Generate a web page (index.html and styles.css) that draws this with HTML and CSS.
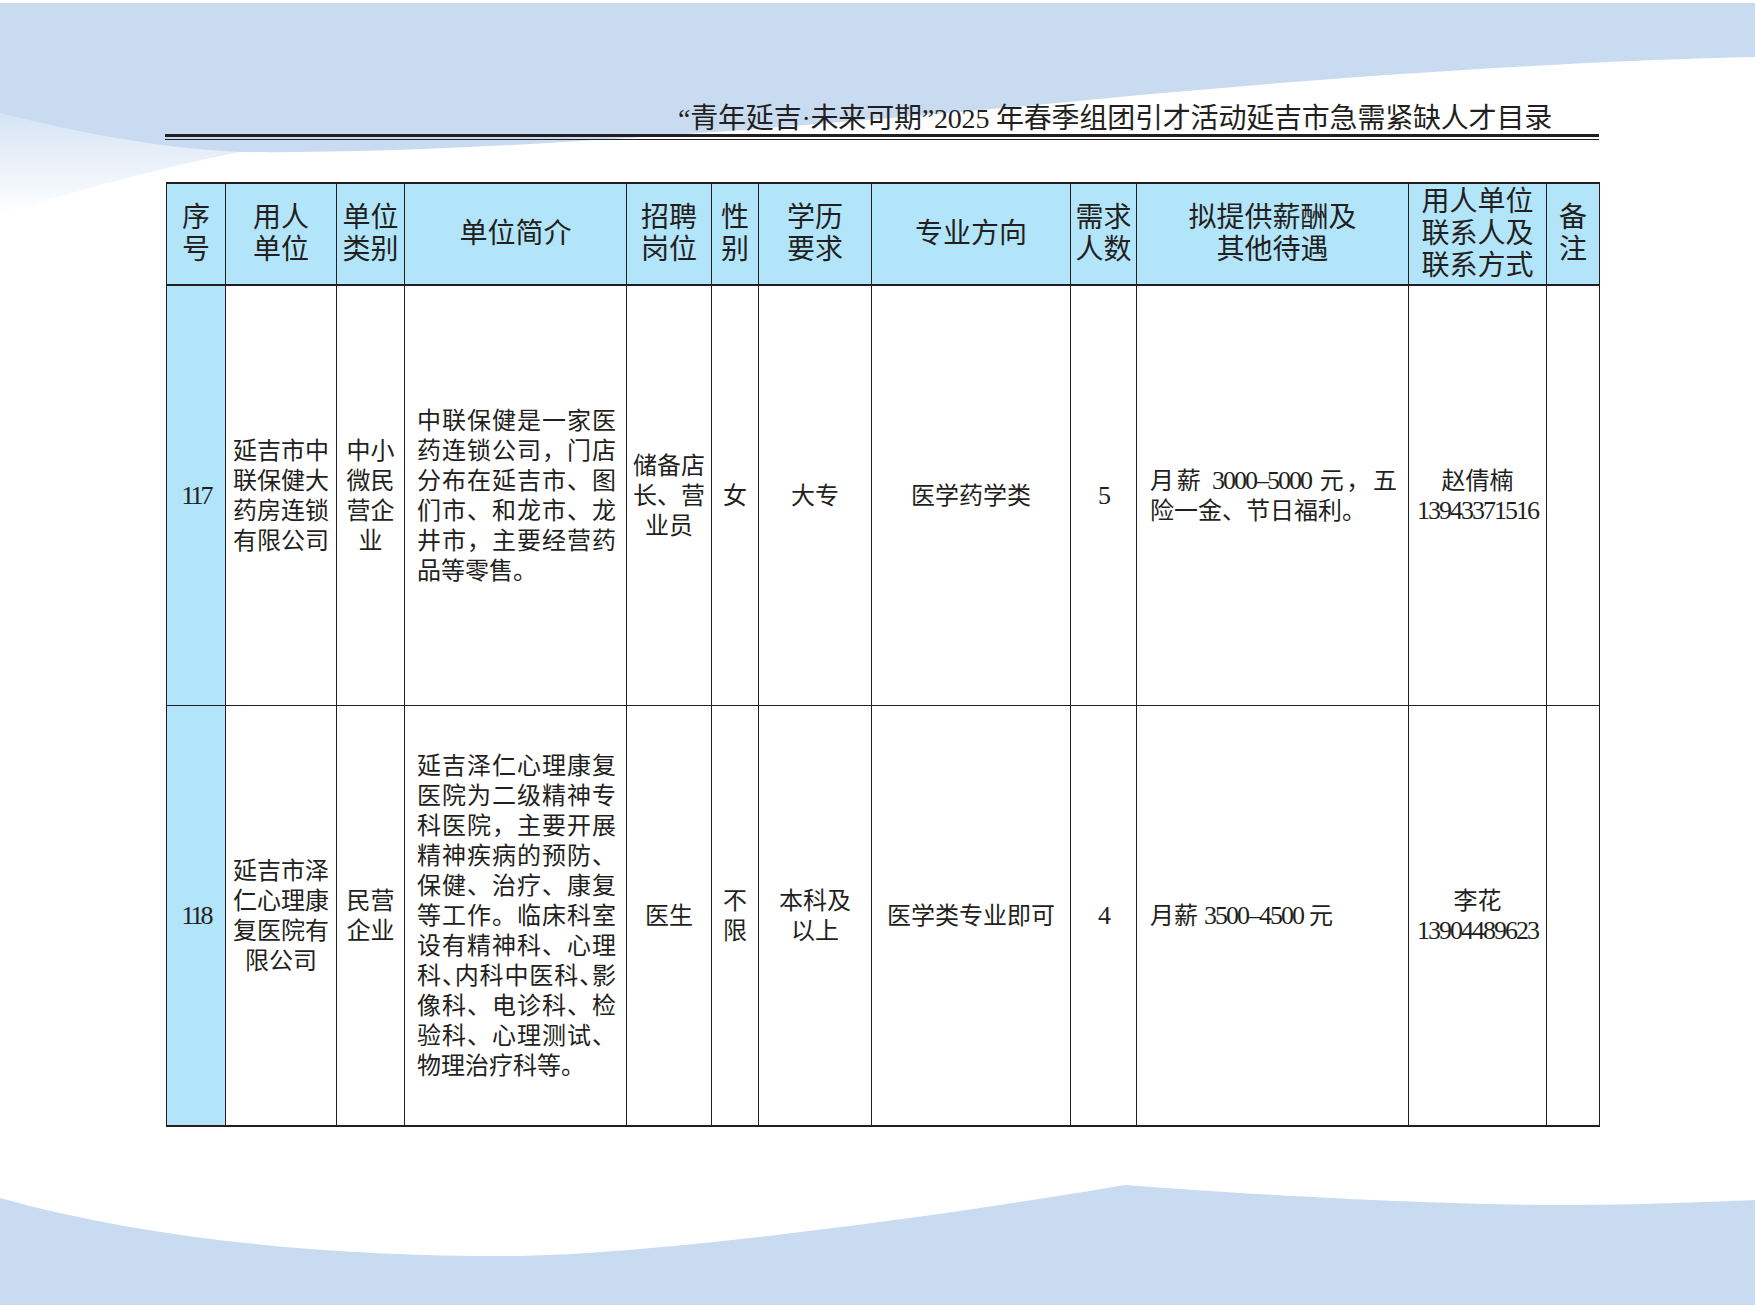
FILE: index.html
```html
<!DOCTYPE html>
<html lang="zh-CN">
<head>
<meta charset="utf-8">
<title>延吉市急需紧缺人才目录</title>
<link rel="stylesheet" href="styles.css">
</head>
<body>
<svg class="bg" viewBox="0 0 1755 1307" width="1755" height="1307" aria-hidden="true">
  <defs>
    <linearGradient id="fade" x1="0" y1="0" x2="0" y2="1">
      <stop offset="0" stop-color="#c8dbf1" stop-opacity="0.75"/>
      <stop offset="1" stop-color="#c8dbf1" stop-opacity="0"/>
    </linearGradient>
  </defs>
  <path d="M0,113 L240,152 C160,168 70,192 0,215 Z" fill="url(#fade)"/>
  <path fill="#c8dbf1" d="M0,3 H1755 V57 C1600,60 1350,75 1119,97 C900,118 500,155 240,152 C150,148 60,128 0,113 Z"/>
  <path fill="#c8dbf1" d="M0,1198 C150,1240 330,1256 504,1256 C650,1256 950,1215 1125,1185 C1250,1195 1450,1205 1556,1205 C1650,1205 1700,1202 1755,1200 V1305 H0 Z"/>
</svg>
<main class="page">
  <header class="doc-head">
    <h1 class="doc-title">“青年延吉·未来可期”2025 年春季组团引才活动延吉市急需紧缺人才目录</h1>
    <div class="rule"></div>
  </header>
  <table class="catalog">
    <colgroup>
      <col class="c1"><col class="c2"><col class="c3"><col class="c4"><col class="c5"><col class="c6">
      <col class="c7"><col class="c8"><col class="c9"><col class="c10"><col class="c11"><col class="c12">
    </colgroup>
    <thead>
      <tr>
        <th>序<br>号</th>
        <th>用人<br>单位</th>
        <th>单位<br>类别</th>
        <th>单位简介</th>
        <th>招聘<br>岗位</th>
        <th>性<br>别</th>
        <th>学历<br>要求</th>
        <th>专业方向</th>
        <th>需求<br>人数</th>
        <th>拟提供薪酬及<br>其他待遇</th>
        <th>用人单位<br>联系人及<br>联系方式</th>
        <th>备<br>注</th>
      </tr>
    </thead>
    <tbody>
      <tr>
        <td class="seq"><span class="num-seq">117</span></td>
        <td>延吉市中<br>联保健大<br>药房连锁<br>有限公司</td>
        <td>中小<br>微民<br>营企<br>业</td>
        <td class="intro"><span class="l">中联保健是一家医</span><span class="l">药连锁公司，门店</span><span class="l">分布在延吉市、图</span><span class="l">们市、和龙市、龙</span><span class="l">井市，主要经营药</span><span class="l last">品等零售。</span></td>
        <td>储备店<br>长、营<br>业员</td>
        <td>女</td>
        <td>大专</td>
        <td>医学药学类</td>
        <td><span class="num">5</span></td>
        <td class="pay"><span class="l">月薪 <span class="num">3000–5000</span> 元，五</span><span class="l last">险一金、节日福利。</span></td>
        <td class="contact">赵倩楠<br><span class="num">13943371516</span></td>
        <td></td>
      </tr>
      <tr>
        <td class="seq"><span class="num-seq">118</span></td>
        <td>延吉市泽<br>仁心理康<br>复医院有<br>限公司</td>
        <td>民营<br>企业</td>
        <td class="intro"><span class="l">延吉泽仁心理康复</span><span class="l">医院为二级精神专</span><span class="l">科医院，主要开展</span><span class="l">精神疾病的预防、</span><span class="l">保健、治疗、康复</span><span class="l">等工作。临床科室</span><span class="l">设有精神科、心理</span><span class="l">科<span class="half">、</span>内科中医科<span class="half">、</span>影</span><span class="l">像科、电诊科、检</span><span class="l">验科、心理测试、</span><span class="l last">物理治疗科等。</span></td>
        <td>医生</td>
        <td>不<br>限</td>
        <td>本科及<br>以上</td>
        <td>医学类专业即可</td>
        <td><span class="num">4</span></td>
        <td class="pay"><span class="l last">月薪 <span class="num">3500–4500</span> 元</span></td>
        <td class="contact">李花<br><span class="num">13904489623</span></td>
        <td></td>
      </tr>
    </tbody>
  </table>
</main>
</body>
</html>
```

FILE: styles.css
```css
html, body {
  margin: 0;
  padding: 0;
}

body {
  position: relative;
  width: 1755px;
  height: 1307px;
  overflow: hidden;
  background: #ffffff;
  color: #231f20;
  font-family: "Liberation Serif", "Noto Sans CJK SC", serif;
}

.bg {
  position: absolute;
  left: 0;
  top: 0;
  z-index: 0;
  display: block;
}

.page {
  position: relative;
  z-index: 1;
  width: 1434px;
  padding: 104px 0 0 165px;
}

.doc-title {
  margin: 0;
  padding-right: 47px;
  font-size: 28px;
  font-weight: normal;
  line-height: 30px;
  text-align: right;
  white-space: nowrap;
  letter-spacing: -0.2px;
}

.rule {
  height: 2px;
  border-top: 3px solid #231f20;
  border-bottom: 1px solid #231f20;
}

.catalog {
  margin: 42px 0 0 1px;
  width: 1433px;
  border-collapse: collapse;
  table-layout: fixed;
  border-top: 2px solid #231f20;
  border-bottom: 2px solid #231f20;
  font-size: 24px;
  line-height: 30px;
}

.c1 { width: 59px; }
.c2 { width: 111px; }
.c3 { width: 68px; }
.c4 { width: 222px; }
.c5 { width: 85px; }
.c6 { width: 47px; }
.c7 { width: 113px; }
.c8 { width: 199px; }
.c9 { width: 66px; }
.c10 { width: 272px; }
.c11 { width: 138px; }
.c12 { width: 53px; }

.catalog th,
.catalog td {
  border: 1px solid #231f20;
  padding: 0;
  text-align: center;
  vertical-align: middle;
}

.catalog th {
  height: 100px;
  background: #b3e5fa;
  font-size: 28px;
  line-height: 32px;
  font-weight: normal;
  border-bottom: 2px solid #231f20;
}

.catalog td {
  height: 419px;
  background: #ffffff;
}

.catalog td.seq {
  background: #b3e5fa;
}

.num-seq {
  font-size: 26px;
  letter-spacing: -3px;
}

.num {
  font-size: 26px;
  letter-spacing: -2px;
}

.intro {
  padding: 0 10px 0 12px !important;
  text-align: left !important;
}

.pay {
  padding: 0 11px 0 13px !important;
  text-align: left !important;
}

.l {
  display: block;
  text-align: justify;
  text-align-last: justify;
}

.l.last {
  text-align: left;
  text-align-last: left;
}

.half {
  font-feature-settings: "halt";
}

.contact {
  line-height: 30px;
}
```
